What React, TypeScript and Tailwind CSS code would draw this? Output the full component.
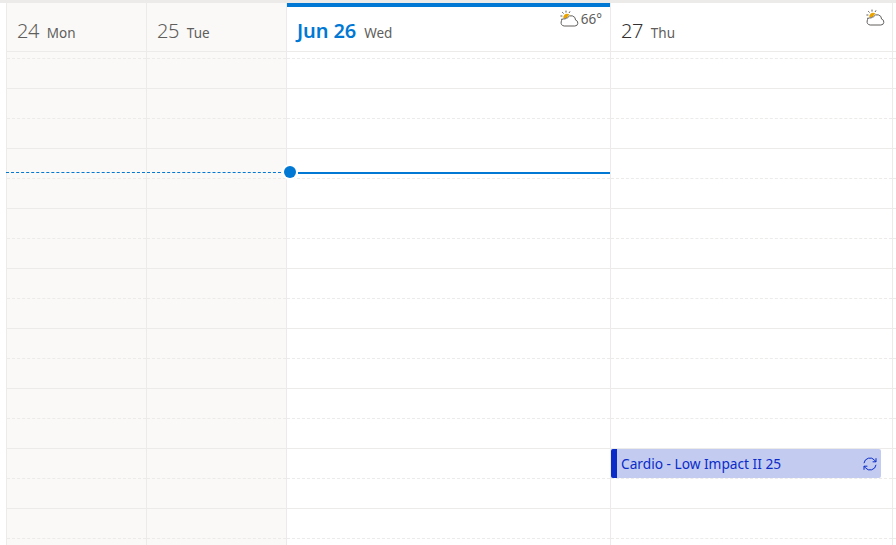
import React from 'react';

const WeatherIcon = () => (
  <svg width="19" height="17" viewBox="0 0 19 17" fill="none">
    <path d="M3.4 8.6a3.8 3.8 0 0 1 5-4.6l1 .6-2.8 3.4-2 .4z" fill="#eaa300" />
    <path d="M6 .6v2M2.2 2.2l1.4 1.3M.4 6h2M10 1.4 9 3M1 9.6l1.4-.8" stroke="#605e5c" strokeWidth="1" />
    <path d="M4.2 16h10.6a3 3 0 0 0 .8-5.9 4.4 4.4 0 0 0-8.2-2.2 3 3 0 0 0-2.2 1A3.4 3.4 0 0 0 4.2 16z" fill="#fff" stroke="#605e5c" strokeWidth="1" />
  </svg>
);

const SyncIcon = () => (
  <svg width="14" height="14" viewBox="0 0 14 14" fill="none" stroke="#0a2bc8" strokeWidth="1">
    <path d="M1 6.2A6 6 0 0 1 11.6 3.2L13 4.8" />
    <path d="M13 1.2v3.6H9.6" />
    <path d="M13 7.8A6 6 0 0 1 2.4 10.8L1 9.2" />
    <path d="M1 12.8V9.2h3.4" />
  </svg>
);

// 9 and a bit hour rows, the first one is cut off by the header
const Slots = () => (
  <div>
    <div className="h-[7px] border-b border-dashed border-[#edebe9]" />
    <div className="h-[30px] border-b border-[#edebe9]" />
    {Array.from({ length: 8 }).map((_, i) => (
      <div key={i}>
        <div className="h-[30px] border-b border-dashed border-[#edebe9]" />
        <div className="h-[30px] border-b border-[#edebe9]" />
      </div>
    ))}
    <div className="h-[30px] border-b border-dashed border-[#edebe9]" />
  </div>
);

interface DayProps {
  date: string;
  name: string;
  width: string;
  bg?: string;
  dateColor?: string;
  today?: boolean;
  temp?: string;
  weather?: boolean;
}

const Day: React.FC<DayProps> = ({ date, name, width, bg, dateColor, today, temp, weather }) => (
  <div className={`shrink-0 border-l border-[#edebe9] ${width} ${bg ?? ''}`}>
    <div className="relative h-[49px] border-b border-[#edebe9]">
      {today && <div className="absolute left-0 right-0 top-0 h-1 bg-[#0078d4]" />}
      {weather && (
        <div className="absolute right-[7px] top-[6px] flex items-center gap-[2px] text-[13.5px] leading-[18px] text-[#605e5c]">
          <WeatherIcon />
          {temp && <span className="mr-px pt-px">{temp}</span>}
        </div>
      )}
      <div className="flex h-full items-baseline pl-[10px] pt-[14px]">
        <span className={`text-[20px] leading-[27px] ${today ? 'font-semibold tracking-[-0.1px] text-[#0078d4]' : 'font-light tracking-[-0.5px]'} ${dateColor ?? ''}`}>{date}</span>
        <span className="ml-2 text-[13.5px] text-[#605e5c]">{name}</span>
      </div>
    </div>
    <Slots />
  </div>
);

export default function App() {
  return (
    <div className="relative h-[545px] w-[896px] overflow-hidden bg-white font-['Noto_Sans',sans-serif]">
      <div className="h-[3px] bg-[#edebe9]" />
      <div className="flex pl-[6px]">
        <Day date="24" name="Mon" width="w-[140px]" bg="bg-[#faf9f8]" dateColor="text-[#605e5c]" />
        <Day date="25" name="Tue" width="w-[140px]" bg="bg-[#faf9f8]" dateColor="text-[#605e5c]" />
        <Day date="Jun 26" name="Wed" width="w-[324px]" today weather temp="66°" />
        <Day date="27" name="Thu" width="w-[282px]" dateColor="text-[#323130]" weather />
        <div className="flex-1 border-l border-[#edebe9]">
          <div className="h-[49px] border-b border-[#edebe9]" />
          <Slots />
        </div>
      </div>

      {/* now line */}
      <div className="absolute left-[6px] top-[172px] w-[280px] border-t border-dashed border-[#0078d4]" />
      <div className="absolute left-[284px] top-[166px] h-3 w-3 rounded-full bg-[#0078d4] ring-2 ring-white" />
      <div className="absolute left-[298px] top-[172px] h-[2px] w-[312px] bg-[#0078d4]" />

      {/* event */}
      <div className="absolute left-[611px] top-[449px] flex h-[29px] w-[270px] items-center rounded-[2px] bg-[#c3cbf1]">
        <div className="h-full w-[6px] rounded-l-[2px] bg-[#0a2bc8]" />
        <span className="ml-1 flex-1 pt-[2px] text-[13.7px] text-[#0a2bc8]">Cardio - Low Impact II 25</span>
        <div className="mr-[4px]">
          <SyncIcon />
        </div>
      </div>
    </div>
  );
}
